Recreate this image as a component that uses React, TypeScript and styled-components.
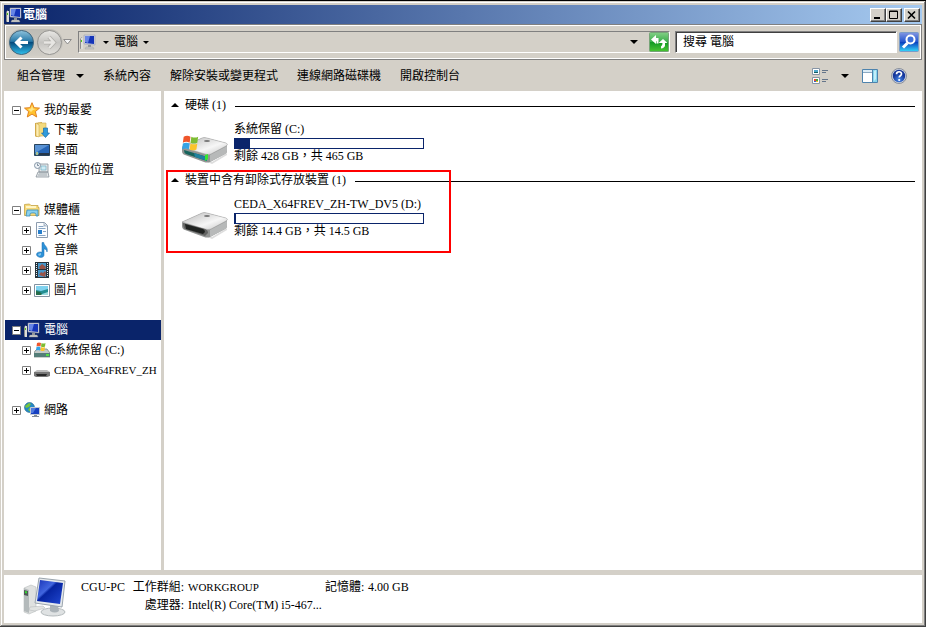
import React from "react";
import styled, { createGlobalStyle, css } from "styled-components";

const face = "#d4d0c8";
const navy = "#0a246a";

const GlobalStyle = createGlobalStyle`
  * { box-sizing: border-box; }
  body {
    margin: 0;
    background: ${face};
    color: #000;
    font: 12px/16px "Liberation Serif", "Noto Sans CJK TC", serif;
  }
  button, input { font: inherit; color: inherit; }
  svg { display: block; flex: none; }
`;

const Window = styled.div`
  display: flex;
  flex-direction: column;
  min-height: 100vh;
  padding: 4px;
  border-top: 1px solid #000;
  background: ${face};
  box-shadow: inset -1px -1px #404040, inset 1px 1px ${face},
    inset -2px -2px #808080, inset 2px 2px #fff;
`;

const TitleBar = styled.header`
  display: flex;
  align-items: center;
  height: 19px;
  padding: 0 2px;
  background: linear-gradient(90deg, ${navy}, #a6caf0);
`;

const Title = styled.h1`
  flex: 1;
  margin: 0 0 0 1px;
  color: #fff;
  font-size: 12px;
  line-height: 18px;
`;

const CaptionButton = styled.button<{ $apart?: boolean }>`
  display: grid;
  place-items: center;
  width: 16px;
  height: 14px;
  margin-left: ${(p) => (p.$apart ? 2 : 0)}px;
  padding: 0;
  border: 1px solid;
  border-color: #fff #404040 #404040 #fff;
  background: ${face};
  box-shadow: inset -1px -1px #808080;
`;

const NavBar = styled.nav`
  display: flex;
  align-items: center;
  height: 36px;
  padding: 0 2px 0 3px;
  border: 1px solid #808080;
  box-shadow: inset 1px 1px #fff, inset -1px -1px #fff;
`;

const PlainButton = styled.button`
  display: flex;
  align-items: center;
  padding: 0;
  border: 0;
  background: none;
  white-space: nowrap;
`;

const HistoryButtons = styled.div`
  display: flex;
  align-items: center;
  gap: 1px;
  border-radius: 14px;
  background: linear-gradient(#bdbbb5, #d0cdc6);
`;

const AddressBar = styled.div`
  display: flex;
  flex: 1;
  align-items: center;
  height: 22px;
  margin: 0 5px 0 6px;
  padding: 0 0 0 1px;
  border: 1px solid;
  border-color: #808080 #fff #fff #808080;
`;

const Crumb = styled(PlainButton)`
  gap: 5px;
  margin-left: 7px;
`;

const DropButton = styled(PlainButton)`
  margin-left: auto;
  margin-right: 11px;
`;

const SearchBox = styled.input`
  width: 222px;
  height: 22px;
  margin-right: 2px;
  padding: 0 7px;
  border: 1px solid;
  border-color: #808080 #fff #fff #808080;
  border-radius: 0;
  background: #fff;
  box-shadow: inset 1px 1px #404040;
  outline: 0;
  &::placeholder { color: #000; opacity: 1; }
`;

const CommandBar = styled.div`
  display: flex;
  align-items: center;
  gap: 19px;
  height: 31px;
  padding: 0 15px 0 13px;
`;

const Organize = styled(PlainButton)`
  gap: 11px;
`;

const ViewTools = styled.div`
  display: flex;
  align-items: center;
  gap: 13px;
  margin-left: auto;
`;

const Body = styled.div`
  display: flex;
  flex: 1;
`;

const Sidebar = styled.aside`
  width: 160px;
  flex: none;
  padding: 9px 0;
  border-right: 3px solid ${face};
  background: #fff;
  overflow: hidden;
`;

const TreeGroup = styled.ul`
  margin: 0 0 20px;
  padding: 0 0 0 1px;
  list-style: none;
`;

const TreeRow = styled.li<{ $level: number; $selected?: boolean }>`
  display: flex;
  align-items: center;
  height: 20px;
  padding-left: ${(p) => (p.$level ? 17 : 7)}px;
  white-space: nowrap;
  ${(p) => p.$selected && css`
    background: ${navy};
    color: #fff;
  `}
`;

const Expander = styled.button`
  width: 9px;
  height: 9px;
  margin-right: 3px;
  padding: 0;
  border: 0;
  background: none;
`;

const ExpanderGap = styled.span`
  width: 12px;
`;

const TreeLabel = styled.a<{ $latin?: boolean }>`
  margin-left: 4px;
  color: inherit;
  font-size: ${(p) => (p.$latin ? 11 : 12)}px;
  text-decoration: none;
`;

const Main = styled.main`
  flex: 1;
  min-width: 0;
  padding: 4px 7px 4px 2px;
  background: #fff;
`;

const DriveGroup = styled.section`
  position: relative;
  height: 75px;
  padding-left: 5px;
`;

const GroupHeader = styled.h2`
  display: flex;
  align-items: center;
  gap: 6px;
  height: 20px;
  margin: 0;
  font-size: 12px;
  font-weight: 400;
  &::after {
    content: "";
    flex: 1;
    height: 1px;
    margin: 3px 0 0 3px;
    background: #000;
  }
`;

const Drive = styled.article`
  display: flex;
  gap: 5px;
  padding: 6px 0 0 10px;
`;

const DriveIconBox = styled.div`
  padding-top: 14px;
`;

const DriveInfo = styled.div`
  width: 190px;
`;

const DriveName = styled.div`
  height: 17px;
  white-space: nowrap;
`;

const Meter = styled.div`
  height: 11px;
  border: 1px solid ${navy};
`;

const MeterFill = styled.div`
  height: 100%;
  background: ${navy};
`;

const DriveSpace = styled.div`
  line-height: 14px;
`;

const Callout = styled.div`
  position: absolute;
  top: 0;
  left: 0;
  width: 285px;
  height: 83px;
  border: 2px solid #f00;
  pointer-events: none;
`;

const Details = styled.footer`
  display: flex;
  gap: 13px;
  height: 53px;
  padding: 2px 18px 0;
  border-top: 5px solid ${face};
  background: #fff;
`;

const Facts = styled.dl`
  display: grid;
  grid-template-columns: 46px 53px 133px 39px auto;
  grid-auto-rows: 18px;
  column-gap: 4px;
  align-content: start;
  margin: 0;
  padding-top: 1px;
  line-height: 18px;
  white-space: nowrap;
`;

const Fact = styled.dd<{ $caps?: boolean }>`
  margin: 0;
  font-size: ${(p) => (p.$caps ? 11 : 12)}px;
`;

const FactLabel = styled.dt<{ $column?: number }>`
  grid-column: ${(p) => p.$column ?? "auto"};
  text-align: right;
`;

const Arrow = ({ size = 8, up = false }: { size?: number; up?: boolean }) => (
  <svg width={size} height={size / 2} viewBox="0 0 8 4">
    <path d={up ? "M0 4L4 0l4 4z" : "M0 0h8L4 4z"} fill="#000" />
  </svg>
);

const ComputerIcon = () => (
  <svg width="16" height="16" viewBox="0 0 16 16">
    <path d="M0 5l2-2v11l-2 1z" fill="#8d8d8d" /><path d="M1 4h2v11H1z" fill="#deded9" />
    <path d="M1 6h1v2H1z" fill="#4fc51c" />
    <path d="M4 1h11v10l-11-1z" fill="#cdd1de" stroke="#9097a8" strokeWidth=".5" />
    <path d="M5 2h9v8l-9-1z" fill="#1534b8" /><path d="M5 2h5l-2 7-3-1z" fill="#6785e6" />
    <path d="M8 11h3v2H8z" fill="#8f949b" /><path d="M6 13h7l1 2H5z" fill="#c7c9c8" stroke="#999" strokeWidth=".4" />
  </svg>
);

const BackIcon = () => (
  <svg width="27" height="27" viewBox="0 0 27 27">
    <defs>
      <linearGradient id="back" x1="0" y1="0" x2="0" y2="1">
        <stop stopColor="#8fc3dd" /><stop offset=".45" stopColor="#2879a8" /><stop offset=".5" stopColor="#064b7d" /><stop offset="1" stopColor="#2fc0ed" />
      </linearGradient>
    </defs>
    <circle cx="13.5" cy="13.5" r="12" fill="url(#back)" stroke="#42667c" />
    <path d="M13.500 8.500l-5 5 5 5M9 13.500h11" fill="none" stroke="#fff" strokeWidth="3" />
  </svg>
);

const ForwardIcon = () => (
  <svg width="27" height="27" viewBox="0 0 27 27">
    <defs>
      <linearGradient id="fwd" x1="0" y1="0" x2="0" y2="1">
        <stop stopColor="#e9e8e5" /><stop offset=".5" stopColor="#c5c4c1" /><stop offset="1" stopColor="#e3e1dc" />
      </linearGradient>
    </defs>
    <circle cx="13.5" cy="13.5" r="12" fill="url(#fwd)" stroke="#949390" />
    <path d="M13 8l5 5.500-5 5.500M18 13.500H8" fill="none" stroke="#b0afab" strokeWidth="4" />
    <path d="M13 8l5 5.500-5 5.500M18 13.500H8" fill="none" stroke="#e7e6e3" strokeWidth="2.4" />
  </svg>
);

const HistoryArrow = () => (
  <svg width="9" height="6" viewBox="0 0 9 6"><path d="M.7.5h7.6L4.5 5z" fill="#f5f5f5" stroke="#777" strokeWidth=".8" /></svg>
);

const RefreshIcon = () => (
  <svg width="20" height="20" viewBox="0 0 20 20">
    <defs><linearGradient id="green" x1="0" y1="0" x2="0" y2="1"><stop stopColor="#83cf86" /><stop offset=".48" stopColor="#3caf4b" /><stop offset=".5" stopColor="#109825" /><stop offset="1" stopColor="#49c533" /></linearGradient></defs>
    <rect x=".5" y=".5" width="19" height="19" rx="1" fill="url(#green)" stroke="#76a477" />
    <path d="M2 7.500l5-4.500v3h2.500v5.500h-2V9H7v3z" fill="#fff" />
    <path d="M9.500 11L14 7l4.500 4h-2.500v2.500q-.5 2.500-4 3v-2q1.500-.5 1.500-3.500z" fill="#fff" />
  </svg>
);

const SearchIcon = () => (
  <svg width="20" height="20" viewBox="0 0 20 20">
    <defs><linearGradient id="blue" x1="0" y1="0" x2="0" y2="1"><stop stopColor="#8397e2" /><stop offset=".48" stopColor="#2456cf" /><stop offset=".5" stopColor="#083bbd" /><stop offset="1" stopColor="#35d8fa" /></linearGradient></defs>
    <rect x=".5" y=".5" width="19" height="19" rx="1" fill="url(#blue)" stroke="#7a9bc8" />
    <circle cx="11.500" cy="7.500" r="4" fill="#3c6ed8" stroke="#fff" strokeWidth="2" />
    <path d="M8.500 11L4 15.500" stroke="#fff" strokeWidth="3" />
  </svg>
);

const MinimizeGlyph = () => <svg width="12" height="10"><path d="M2 7h6v2H2z" /></svg>;
const MaximizeGlyph = () => <svg width="12" height="10"><path d="M1.500 1h8v7.500h-8zM1 1.500h9" fill="none" stroke="#000" /></svg>;
const CloseGlyph = () => <svg width="12" height="10"><path d="M2 1.500l7 7m0-7l-7 7" stroke="#000" strokeWidth="1.600" /></svg>;

const ViewIcon = () => (
  <svg width="16" height="16" viewBox="0 0 16 16">
    <path d="M.5.500h7v6h-7zM.5 9.500h7v6h-7z" fill="#fff" stroke="#8795a5" />
    <path d="M2 2h4v3H2z" fill="#4ca7cc" /><path d="M2 4h4v1H2z" fill="#175f62" />
    <path d="M2 11h2v2H2z" fill="#ec4531" /><path d="M4 11h2v2H4z" fill="#41a746" /><path d="M2 13h2v1H2z" fill="#3264ce" /><path d="M4 13h2v1H4z" fill="#f2be27" />
    <path d="M10 2.500h6M10 4.500h4M10 11.500h6M10 13.500h4" stroke="#65758a" />
  </svg>
);

const PaneIcon = () => (
  <svg width="16" height="14" viewBox="0 0 16 14">
    <path d="M.5.500h15v13H.5z" fill="#fff" stroke="#4e83ad" /><path d="M1 1h14v2H1z" fill="#dcecf6" /><path d="M1 3.500h9" stroke="#8baac3" />
    <path d="M10 1h5v12h-5z" fill="#87d6ed" /><path d="M10.500 1v12" stroke="#4e83ad" /><path d="M12 2l2-1v9l-2 2z" fill="#c4edf8" />
  </svg>
);

const HelpIcon = () => (
  <svg width="16" height="16" viewBox="0 0 16 16">
    <defs><radialGradient id="help" cy=".8"><stop stopColor="#4589ea" /><stop offset="1" stopColor="#15369b" /></radialGradient></defs>
    <circle cx="8" cy="8" r="7.500" fill="#cbd2de" stroke="#777f8e" strokeWidth=".8" /><circle cx="8" cy="8" r="6.200" fill="url(#help)" />
    <path d="M5.500 6.200C5.600 3 10.700 3 10.500 6c-.1 1.800-2.300 1.700-2.300 3.600" fill="none" stroke="#fff" strokeWidth="1.700" /><circle cx="8.200" cy="12" r="1.100" fill="#fff" />
  </svg>
);

const StarIcon = () => (
  <svg width="16" height="16" viewBox="0 0 16 16"><path d="M8 .7l2.100 5 5.400.4-4.100 3.500 1.300 5.400L8 12.100 3.300 15l1.300-5.400L.5 6.100l5.400-.4z" fill="#ffc32e" stroke="#e28220" /><path d="M8 3l1 3.500 3 .5-3 1-2 2-3-3 3-.5z" fill="#ffe68a" /></svg>
);

const DownloadsIcon = () => (
  <svg width="16" height="16" viewBox="0 0 16 16"><path d="M1 1l7-1v14l-6 1-1-1z" fill="#d6ad4c" /><path d="M4 1h8v13H4z" fill="#f4db7e" stroke="#cfad52" strokeWidth=".6" /><path d="M2 1l3 2v12l-3-1z" fill="#ffeeb0" stroke="#c5a249" strokeWidth=".5" /><path d="M9.500 6h4v5h2L11.500 15.500 7.500 11h2z" fill="#309bdc" stroke="#176dac" strokeWidth=".7" /></svg>
);

const DesktopIcon = () => (
  <svg width="16" height="16" viewBox="0 0 16 16"><path d="M.5 2.500h15v11H.5z" fill="#2765b6" stroke="#29445d" /><path d="M1 3h14L3 10H1z" fill="#5992d4" /><path d="M1 11h14v2H1z" fill="#26374a" /><circle cx="3" cy="11.500" r="1.700" fill="#59b6da" /><path d="M3 10v3" stroke="#f9c748" /></svg>
);

const RecentIcon = () => (
  <svg width="16" height="16" viewBox="0 0 16 16"><path d="M5 2h9v8H5zM4 10h10l1 5H2z" fill="#e4e7e9" stroke="#89939b" strokeWidth=".8" /><path d="M7 4h5v4H7z" fill="#cfebf4" stroke="#66a7c0" strokeWidth=".6" /><path d="M5 11h8M4 13h9" stroke="#9fa9af" /><circle cx="3.500" cy="3.500" r="3" fill="#eff3f7" stroke="#8595a6" /><path d="M3.500 1.500v2H5" fill="none" stroke="#52677d" strokeWidth=".7" /></svg>
);

const LibraryIcon = () => (
  <svg width="16" height="16" viewBox="0 0 16 16"><path d="M.5 2.500l5-.5 1.500 1.500h7v2h1v8H.5z" fill="#f6d979" stroke="#c5a348" strokeWidth=".8" /><path d="M2 4h10v2H2z" fill="#fff5c4" /><path d="M3 8h11v6h-2v-2c0-1.500-6-1.500-6 0v2H2z" fill="#8bd1ef" stroke="#398bb6" strokeWidth=".8" /></svg>
);

const DocumentIcon = () => (
  <svg width="16" height="16" viewBox="0 0 16 16"><path d="M2.500.500h8l3 3v12h-11z" fill="#fbfdff" stroke="#8d9cae" /><path d="M10 1v3h3" fill="#cad9e9" stroke="#8d9cae" strokeWidth=".7" /><path d="M4.500 4.500h5M4.500 6.500h7M9 9.500h3M4.500 13.500h7" stroke="#87a5c4" /><path d="M4 8h4v4H4z" fill="#267ecb" /></svg>
);

const MusicIcon = () => (
  <svg width="16" height="16" viewBox="0 0 16 16"><path d="M8 .5h1.800C10 4 14.500 4.500 13 10c-.5-3-2.500-3-3-3v6c0 4-8 2.500-7.500-.8C2.700 10 6.500 9.500 8 10.300z" fill="#2d91d7" stroke="#186db0" strokeWidth=".5" /><path d="M4 12l3-1v2l-2 1z" fill="#85c5ed" /></svg>
);

const VideoIcon = () => (
  <svg width="16" height="16" viewBox="0 0 16 16"><path d="M1 0h14v16H1z" fill="#27343d" /><path d="M4 1h8v6H4zM4 8h8v7H4z" fill="#4696ca" /><path d="M5 5l3-3 4 3-1 2H6zM5 13l2-3 2 1 2-2 1 2-1 4z" fill="#985449" /><path d="M2.500 1v14M13.500 1v14" stroke="#edf3f4" strokeDasharray="1 1" /></svg>
);

const PictureIcon = () => (
  <svg width="16" height="16" viewBox="0 0 16 16"><path d="M.5 2.500h15v12H.5z" fill="#fff" stroke="#8192a1" /><path d="M2 4h12v9H2z" fill="#7fd2ef" /><path d="M2 8l5 1 7-2v6H2z" fill="#238e92" /><path d="M2 9l4 1 3 3H2z" fill="#276d4b" /><path d="M8 12l6-2v3H7z" fill="#9bdbe0" /></svg>
);

const Flag = () => (
  <g>
    <path d="M1 1q2-1 4 0L4.500 4.500q-2-1-4 0z" fill="#ef562b" /><path d="M5.500 1q2 1 4 0L9 4.500q-2 1-4 0z" fill="#7dbc32" />
    <path d="M.5 5q2-1 4 0L4 8.500Q2 7.500 0 8.500z" fill="#35a3e5" /><path d="M5 5q2 1 4 0l-.5 3.500q-2 1-4 0z" fill="#fcc42b" />
  </g>
);

const SystemDriveIcon = () => (
  <svg width="16" height="16" viewBox="0 0 16 16"><path d="M1 9l2-2h10l3 4v4H0v-4z" fill="#c4cac8" stroke="#6e7977" strokeWidth=".7" /><path d="M0 11h16v4H0z" fill="#547d78" /><path d="M12 12h3v2h-3z" fill="#54df45" /><g transform="translate(2 0)"><Flag /></g></svg>
);

const SmallDriveIcon = () => (
  <svg width="16" height="16" viewBox="0 0 16 16"><path d="M0 10l3-2h10l3 2v4H0z" fill="#bcbcbc" /><path d="M0 10h16v4l-3 1H2l-2-1z" fill="#777" /><path d="M2 12h11l-1 2H3z" fill="#292929" /></svg>
);

const NetworkIcon = () => (
  <svg width="16" height="16" viewBox="0 0 16 16"><circle cx="5.500" cy="5.500" r="5" fill="#2489c6" stroke="#266587" strokeWidth=".6" /><path d="M1 4l4-3 2 1-2 3-3 1zM6 5l3 2-2 3-3-2z" fill="#77c63c" /><path d="M6.500 5.500h9v7h-9z" fill="#163fc0" stroke="#c1c8d4" /><path d="M7 6h5l-3 5H7z" fill="#507ade" /><path d="M10 13h3v1h2v1H8v-1h2z" fill="#828b96" /></svg>
);

const LargeDriveIcon = ({ system = false }: { system?: boolean }) => {
  const id = system ? "systemTop" : "removableTop";
  return (
    <svg width="48" height="30" viewBox="0 0 48 30">
      <defs><linearGradient id={id} x1="0" y1="0" x2="1" y2="1"><stop stopColor="#b8b8b8" /><stop offset=".6" stopColor="#f6f6f6" /><stop offset="1" stopColor="#c4c4c4" /></linearGradient></defs>
      <path d="M4 17l27 12 15-9v-2L31 27z" fill="#ddd" />
      <path d="M1 12l20-9q2-1 5 0l19 5q2 1 1 3v5q0 2-2 3l-15 8q-3 1-6 0L4 20q-3-1-3-4z" fill="#929493" />
      <path d="M1 12l20-9q2-1 5 0l19 5q3 1 0 3l-15 8q-3 1-6 0z" fill={`url(#${id})`} stroke="#a5a5a5" strokeWidth=".5" />
      <path d="M29 20l17-9v5q0 2-2 3l-15 8z" fill="#b7b9b9" />
      <ellipse cx="26" cy="6" rx="3" ry="1" fill="#777" />
      {system ? (
        <><path d="M3 15l20 6q3 1 3 5L5 19q-2-1-2-4z" fill="#17645c" /><path d="M13 18l13 4v4l-12-4z" fill="#1f819f" /><path d="M24 20l3-1v5l-3 2z" fill="#35e630" /><g transform="translate(1 0) scale(1.700)"><Flag /></g></>
      ) : (
        <><path d="M2 13l22 6q3 1 3 4l-3 3L4 19q-2-1-2-6z" fill="#636463" /><path d="M4 14l18 5q2 1 2 3l-2 2-17-5z" fill="#202321" /></>
      )}
    </svg>
  );
};

const LargeComputerIcon = () => (
  <svg width="46" height="41" viewBox="0 0 46 41">
    <defs><linearGradient id="screen" x1="0" y1="0" x2="1" y2="1"><stop stopColor="#1833b7" /><stop offset=".38" stopColor="#4166df" /><stop offset=".45" stopColor="#0624a0" /><stop offset="1" stopColor="#2148d1" /></linearGradient></defs>
    <path d="M2 11l7-3 5 2v24l-7 3-5-2z" fill="#dfe1e0" stroke="#b9bdbd" strokeWidth=".6" /><path d="M2 11l5 2v23l-5-2z" fill="#b4babb" /><path d="M2 13l4 1v5l-4-1z" fill="#515858" /><path d="M3 14l2 .5v2L3 16z" fill="#34d832" />
    <ellipse cx="31" cy="35" rx="12" ry="4" fill="#dfe2e3" stroke="#b4babc" /><path d="M28 28h8l1 6q-4 3-9 0z" fill="#abb3b8" />
    <path d="M17 1l26 3-3 26-27-4z" fill="#e5e9ec" stroke="#9ba5ae" /><path d="M18 3l23 3-3 21-23-3z" fill="url(#screen)" />
    <path d="M8 30l13-1 2 2-10 3-6-1z" fill="#e1e3e2" stroke="#b0b5b6" strokeWidth=".5" />
  </svg>
);

const ExpanderGlyph = ({ open }: { open?: boolean }) => (
  <svg width="9" height="9"><path d="M.5.500h8v8h-8z" fill="#fff" stroke="#808080" /><path d={open ? "M2 4.500h5" : "M2 4.500h5M4.500 2v5"} stroke="#000" /></svg>
);

type Node = { label: string; icon: React.ReactNode; level: number; open?: boolean; leaf?: boolean; selected?: boolean; latin?: boolean };

const tree: Node[][] = [
  [
    { label: "我的最愛", icon: <StarIcon />, level: 0, open: true },
    { label: "下載", icon: <DownloadsIcon />, level: 1, leaf: true },
    { label: "桌面", icon: <DesktopIcon />, level: 1, leaf: true },
    { label: "最近的位置", icon: <RecentIcon />, level: 1, leaf: true },
  ],
  [
    { label: "媒體櫃", icon: <LibraryIcon />, level: 0, open: true },
    { label: "文件", icon: <DocumentIcon />, level: 1 },
    { label: "音樂", icon: <MusicIcon />, level: 1 },
    { label: "視訊", icon: <VideoIcon />, level: 1 },
    { label: "圖片", icon: <PictureIcon />, level: 1 },
  ],
  [
    { label: "電腦", icon: <ComputerIcon />, level: 0, open: true, selected: true },
    { label: "系統保留 (C:)", icon: <SystemDriveIcon />, level: 1 },
    { label: "CEDA_X64FREV_ZH", icon: <SmallDriveIcon />, level: 1, latin: true },
  ],
  [{ label: "網路", icon: <NetworkIcon />, level: 0 }],
];

const drives = [
  { group: "硬碟 (1)", name: "系統保留 (C:)", space: "剩餘 428 GB，共 465 GB", used: 8, system: true },
  { group: "裝置中含有卸除式存放裝置 (1)", name: "CEDA_X64FREV_ZH-TW_DV5 (D:)", space: "剩餘 14.4 GB，共 14.5 GB", used: 0.7, system: false },
];

export default function App() {
  return (
    <Window lang="zh-TW">
      <GlobalStyle />
      <TitleBar>
        <ComputerIcon />
        <Title>電腦</Title>
        <CaptionButton aria-label="最小化"><MinimizeGlyph /></CaptionButton>
        <CaptionButton aria-label="最大化"><MaximizeGlyph /></CaptionButton>
        <CaptionButton aria-label="關閉" $apart><CloseGlyph /></CaptionButton>
      </TitleBar>
      <NavBar>
        <HistoryButtons>
          <PlainButton aria-label="上一頁"><BackIcon /></PlainButton>
          <PlainButton aria-label="下一頁"><ForwardIcon /></PlainButton>
        </HistoryButtons>
        <PlainButton aria-label="最近的頁面"><HistoryArrow /></PlainButton>
        <AddressBar>
          <ComputerIcon />
          <Crumb><Arrow size={6} />電腦<Arrow size={6} /></Crumb>
          <DropButton aria-label="先前的位置"><Arrow /></DropButton>
          <PlainButton aria-label="重新整理"><RefreshIcon /></PlainButton>
        </AddressBar>
        <SearchBox type="text" placeholder="搜尋 電腦" aria-label="搜尋 電腦" />
        <PlainButton aria-label="搜尋"><SearchIcon /></PlainButton>
      </NavBar>
      <CommandBar>
        <Organize>組合管理<Arrow /></Organize>
        <PlainButton>系統內容</PlainButton>
        <PlainButton>解除安裝或變更程式</PlainButton>
        <PlainButton>連線網路磁碟機</PlainButton>
        <PlainButton>開啟控制台</PlainButton>
        <ViewTools>
          <PlainButton aria-label="變更檢視"><ViewIcon /></PlainButton>
          <PlainButton aria-label="其他選項"><Arrow /></PlainButton>
          <PlainButton aria-label="預覽窗格"><PaneIcon /></PlainButton>
          <PlainButton aria-label="說明"><HelpIcon /></PlainButton>
        </ViewTools>
      </CommandBar>
      <Body>
        <Sidebar>
          {tree.map((nodes) => (
            <TreeGroup key={nodes[0].label}>
              {nodes.map((n) => (
                <TreeRow key={n.label} $level={n.level} $selected={n.selected}>
                  {n.leaf ? <ExpanderGap /> : <Expander aria-label={n.open ? "摺疊" : "展開"}><ExpanderGlyph open={n.open} /></Expander>}
                  {n.icon}
                  <TreeLabel href="#" $latin={n.latin}>{n.label}</TreeLabel>
                </TreeRow>
              ))}
            </TreeGroup>
          ))}
        </Sidebar>
        <Main>
          {drives.map((d) => (
            <DriveGroup key={d.group}>
              <GroupHeader><Arrow up />{d.group}</GroupHeader>
              <Drive>
                <DriveIconBox><LargeDriveIcon system={d.system} /></DriveIconBox>
                <DriveInfo>
                  <DriveName>{d.name}</DriveName>
                  <Meter><MeterFill style={{ width: `${d.used}%` }} /></Meter>
                  <DriveSpace>{d.space}</DriveSpace>
                </DriveInfo>
              </Drive>
              {!d.system && <Callout />}
            </DriveGroup>
          ))}
        </Main>
      </Body>
      <Details>
        <LargeComputerIcon />
        <Facts>
          <Fact>CGU-PC</Fact>
          <FactLabel>工作群組:</FactLabel>
          <Fact $caps>WORKGROUP</Fact>
          <FactLabel>記憶體:</FactLabel>
          <Fact>4.00 GB</Fact>
          <FactLabel $column={2}>處理器:</FactLabel>
          <Fact>Intel(R) Core(TM) i5-467...</Fact>
        </Facts>
      </Details>
    </Window>
  );
}
